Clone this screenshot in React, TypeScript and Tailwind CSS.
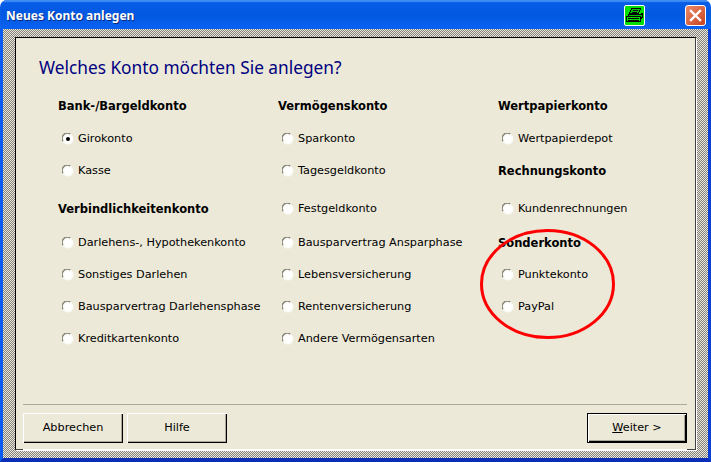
const font = { fontFamily: '"DejaVu Sans", "Noto Sans", sans-serif' };

type Cell = { t: string; h?: boolean; on?: boolean } | null;

const rows: Cell[] = [
  { t: "Bank-/Bargeldkonto", h: true },
  { t: "Vermögenskonto", h: true },
  { t: "Wertpapierkonto", h: true },
  { t: "Girokonto", on: true },
  { t: "Sparkonto" },
  { t: "Wertpapierdepot" },
  { t: "Kasse" },
  { t: "Tagesgeldkonto" },
  { t: "Rechnungskonto", h: true },
  { t: "Verbindlichkeitenkonto", h: true },
  { t: "Festgeldkonto" },
  { t: "Kundenrechnungen" },
  { t: "Darlehens-, Hypothekenkonto" },
  { t: "Bausparvertrag Ansparphase" },
  { t: "Sonderkonto", h: true },
  { t: "Sonstiges Darlehen" },
  { t: "Lebensversicherung" },
  { t: "Punktekonto" },
  { t: "Bausparvertrag Darlehensphase" },
  { t: "Rentenversicherung" },
  { t: "PayPal" },
  { t: "Kreditkartenkonto" },
  { t: "Andere Vermögensarten" },
  null,
];

function Radio({ on }: { on?: boolean }) {
  return (
    <svg width="12" height="12" viewBox="0 0 12 12" className="mr-[4px] ml-[4px] shrink-0">
      <circle cx="6" cy="6" r="5.5" fill="#fbfbf8" />
      <path d="M1 8.2A5.2 5.2 0 0 1 8.2 1" fill="none" stroke="#85847a" strokeWidth="1.4" />
      <circle cx="6" cy="6" r="3.8" fill="#ffffff" />
      {on && <circle cx="6" cy="6" r="2" fill="#000000" />}
    </svg>
  );
}

function Btn({ label, primary }: { label: React.ReactNode; primary?: boolean }) {
  return (
    <div
      className={
        "w-[100px] h-[30px] flex items-center justify-center text-[11.25px] text-black bg-[#ece9d8] " +
        (primary
          ? "border border-black shadow-[inset_1px_1px_0_#fff,inset_-1px_-1px_0_#000,inset_-2px_-2px_0_#aca899]"
          : "shadow-[inset_1px_1px_0_#fff,inset_-1px_-1px_0_#000,inset_-2px_-2px_0_#aca899]")
      }
    >
      {label}
    </div>
  );
}

export default function App() {
  return (
    <div
      className="relative w-[711px] h-[462px] overflow-hidden flex flex-col rounded-t-[7px]"
      style={font}
    >
      {/* title bar */}
      <div className="h-[29px] shrink-0 flex items-center pl-[6px] pr-[5px] pt-[2px] bg-gradient-to-b from-[#0a5ee8] via-[#0258e0] to-[#0a62f2] shadow-[inset_0_2px_1px_#3f8cf3]">
        <span
          className="text-[12px] font-bold text-white [text-shadow:1px_1px_0_#0a2a80] grow"
          style={{ fontFamily: '"Noto Sans", sans-serif' }}
        >
          Neues Konto anlegen
        </span>
        <div className="w-[21px] h-[21px] mr-[40px] rounded-[2px] border border-white bg-[#00e000] flex items-center justify-center">
          <svg width="17" height="15" viewBox="0 0 17 15" fill="none" stroke="#000000" strokeWidth="1" shapeRendering="crispEdges">
            <path d="M5.5 .5h9l-2 5h-9z" fill="#00c000" />
            <path d="M2.5 6.5h12l2 -1v4l-2 1h-12z" fill="#00c000" />
            <path d="M.5 8.5h14v5h-14z" fill="#00e000" />
            <path d="M2 10.5h11M2 12.5h11M7 2.5h5M6 4.5h5" />
          </svg>
        </div>
        <div className="w-[21px] h-[21px] rounded-[3px] border border-white bg-gradient-to-br from-[#eb8a6a] to-[#c8401c] flex items-center justify-center">
          <svg width="13" height="13" viewBox="0 0 13 13">
            <path d="M2 2l9 9M11 2l-9 9" stroke="#fff" strokeWidth="2.4" strokeLinecap="square" />
          </svg>
        </div>
      </div>

      {/* dithered client area */}
      <div className="grow flex flex-col border-l-[3px] border-l-[#0a5cf0] border-r-[3px] border-r-[#0a3cd8] border-b-[4px] border-b-[#0a2db8] px-[12px] pt-[8px] pb-[8px] bg-[repeating-conic-gradient(#808080_0_25%,#ece9d8_0_50%)] bg-[length:2px_2px]">
        <div className="grow flex flex-col bg-[#ece9d8] border border-[#404040] border-t-black border-l-black shadow-[1px_1px_0_#fff] pl-[7px] pr-[8px]">
          <div
            className="text-[17.3px] leading-[24px] text-[#000080] pl-[16px] mt-[18px]"
            style={{ fontFamily: '"Noto Sans", sans-serif' }}
          >
            Welches Konto möchten Sie anlegen?
          </div>

          <div className="mt-[16px] pl-[35px] grid grid-cols-[220px_220px_220px] grid-rows-[33px_32px_38px_34px_32px_32px_32px_20px] text-[11.25px] text-black">
            {rows.map((c, i) =>
              c === null ? (
                <div key={i} />
              ) : c.h ? (
                <div key={i} className="h-5 leading-5 text-[11.5px] font-bold whitespace-nowrap">
                  {c.t}
                </div>
              ) : (
                <div key={i} className="h-5 leading-5 flex items-center whitespace-nowrap">
                  <Radio on={c.on} />
                  <span>{c.t}</span>
                </div>
              )
            )}
          </div>

          <div className="mt-auto border-t border-[#aca899] shadow-[0_1px_0_#fff] pt-[8px] pb-[6px] flex gap-[4px]">
            <Btn label="Abbrechen" />
            <Btn label="Hilfe" />
            <div className="ml-auto">
              <Btn
                primary
                label={
                  <span>
                    <span className="underline">W</span>eiter &gt;
                  </span>
                }
              />
            </div>
          </div>
        </div>
      </div>

      {/* hand-drawn highlight */}
      <svg className="absolute left-[478px] top-[227px]" width="140" height="114" viewBox="0 0 140 114" fill="none">
        <ellipse cx="69.5" cy="57" rx="66" ry="53.5" stroke="#ff0000" strokeWidth="3" />
      </svg>
    </div>
  );
}
